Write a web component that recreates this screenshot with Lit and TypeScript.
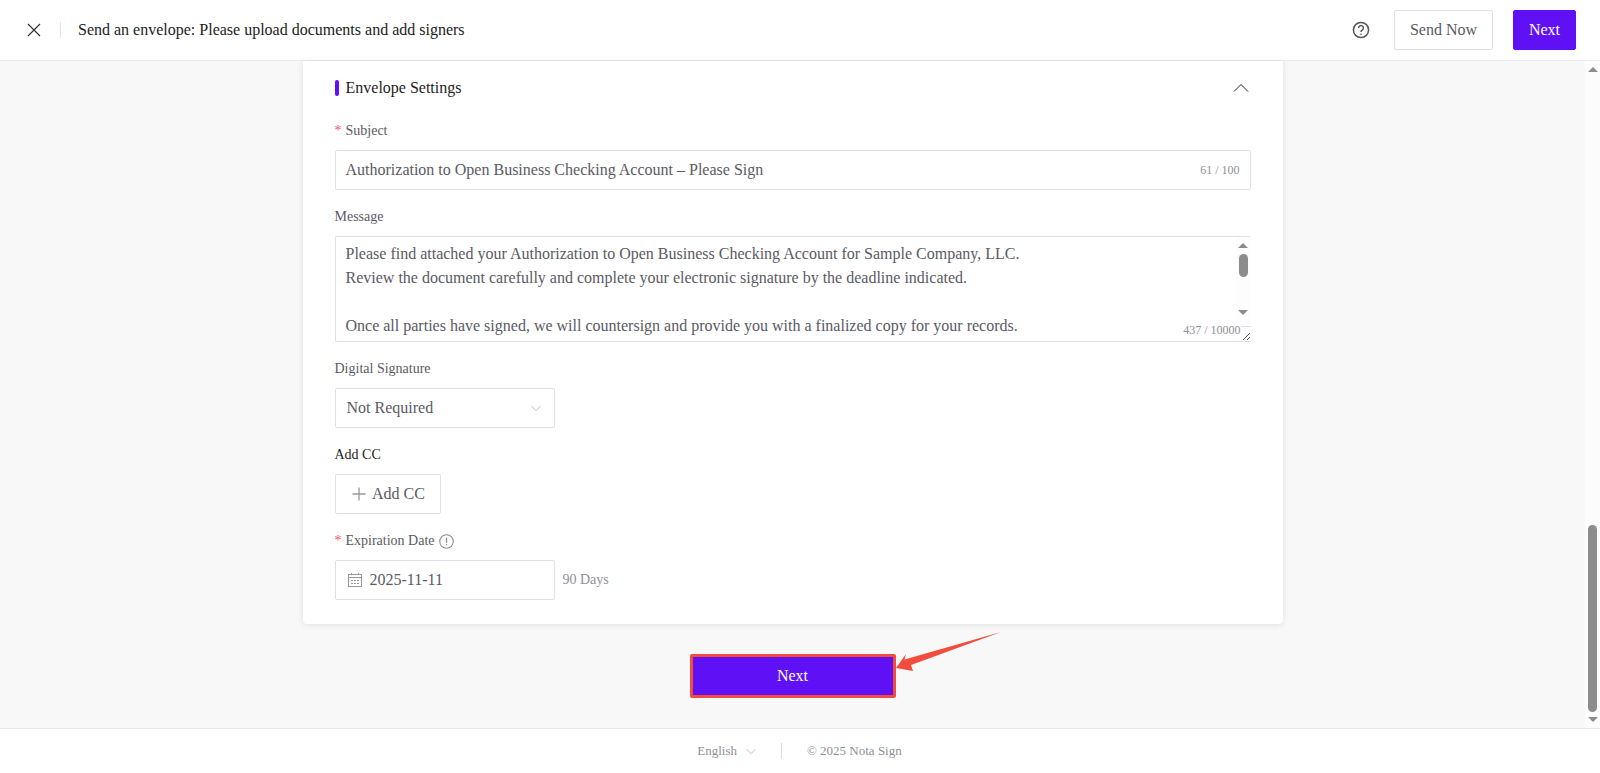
import { LitElement, html, css } from "lit";
import { customElement } from "lit/decorators.js";

const chevron = (size: number, up = false) => html`<svg width=${size} height=${size} viewBox="0 0 16 16" fill="none" stroke="currentColor" stroke-width="1"><path d=${up ? "M1 11.5 L8 4.5 L15 11.5" : "M2 5.5 L8 11.5 L14 5.5"}/></svg>`;

@customElement("app-root")
export class AppRoot extends LitElement {
  static styles = css`
    :host { display: flex; flex-direction: column; height: 773px; overflow: hidden; font-family: "Liberation Serif", serif; color: #5a5a64; background: #fff; }
    button { font: inherit; cursor: pointer; }
    .header { height: 60px; flex: none; display: flex; align-items: center; background: #fff; border-bottom: 1px solid #ebebee; padding: 0 24px 0 26px; }
    .close { width: 16px; height: 16px; color: #333; display: flex; }
    .hsep { width: 1px; height: 16px; background: #e3e3e8; margin: 0 17px 0 18px; }
    .title { font-size: 16px; color: #1c1c22; flex: 1; }
    .help { width: 20px; height: 20px; color: #555; display: flex; margin-right: 23px; }
    .btn { height: 40px; border-radius: 2px; font-size: 16px; border: 1px solid #dfdfe8; background: #fff; color: #5a5a64; padding: 0; display: flex; align-items: center; justify-content: center; }
    .send { width: 99px; margin-right: 20px; }
    .primary { width: 63px; background: #6010f5; border-color: #6010f5; color: #fff; }
    .main { flex: 1; display: flex; min-height: 0; background: #f8f8f8; }
    .content { flex: 1; display: flex; flex-direction: column; align-items: center; min-width: 0; }
    .card { width: 980px; height: 563px; flex: none; box-sizing: border-box; background: #fff; border-radius: 0 0 4px 4px; box-shadow: 0 1px 6px rgba(0,0,0,.1); padding: 0 32px; display: flex; flex-direction: column; }
    .section { height: 49px; flex: none; display: flex; align-items: center; margin-top: 2px; padding-right: 1px; }
    .bar { width: 4px; height: 16px; border-radius: 2px; background: #6010f5; margin-right: 7px; }
    .section-title { font-size: 16px; color: #1c1c22; flex: 1; }
    .collapse { color: #222; width: 16px; height: 16px; display: flex; margin-right: 1px; }
    .label { font-size: 14px; line-height: 18px; height: 18px; color: #5a5a64; display: flex; align-items: center; }
    .label.dark { color: #1c1c22; }
    .req { color: #f5555f; margin-right: 4px; font-size: 14px; }
    .info { width: 15px; height: 15px; margin-left: 4px; color: #8c8c8c; display: flex; }
    .l-subject { margin-top: 10px; }
    .l-message { margin-top: 18px; }
    .l-digital { margin-top: 18px; }
    .l-cc { margin-top: 18px; }
    .l-exp { margin-top: 18px; }
    .field { box-sizing: border-box; height: 40px; border: 1px solid #dfdfe8; border-radius: 2px; background: #fff; display: flex; align-items: center; font-size: 16px; color: #5a5a64; margin-top: 10px; flex: none; }
    .subject { padding: 0 10px; justify-content: space-between; margin-top: 10px; }
    .count { font-size: 12px; color: #8f8f99; }
    .textarea { box-sizing: border-box; position: relative; flex: none; height: 106px; margin-top: 10px; border: 1px solid #dfdfe8; border-right: none; border-radius: 2px; display: flex; font-size: 16px; color: #5a5a64; overflow: hidden; }
    .ta-text { flex: 1; padding: 5px 10px 0; line-height: 24px; min-width: 0; }
    .ta-line { height: 24px; white-space: nowrap; }
    .ta-scroll { width: 15px; flex: none; background: #fdfdfd; display: flex; flex-direction: column; align-items: center; position: relative; }
    .ta-up { margin-top: 6px; }
    .ta-down { margin-top: 33px; }
    .ta-corner { position: absolute; right: 0; bottom: 0; width: 12px; height: 14px; background: #fff; border-top: 1px solid #dfdfe8; display: flex; align-items: flex-end; justify-content: flex-end; }
    .ta-count { position: absolute; right: 10px; bottom: 4px; font-size: 12px; line-height: 14px; color: #8f8f99; background: #fff; }
    .tri-up { width: 0; height: 0; border-left: 5px solid transparent; border-right: 5px solid transparent; border-bottom: 5px solid #8c8c8c; }
    .tri-down { width: 0; height: 0; border-left: 5px solid transparent; border-right: 5px solid transparent; border-top: 5px solid #8c8c8c; }
    .ta-thumb { width: 9px; height: 23px; border-radius: 5px; background: #8c8c8c; margin-top: 6px; }
    .select { width: 220px; padding: 0 11px; justify-content: space-between; }
    .sel-chev { width: 12px; height: 12px; color: #a6a6ad; display: flex; margin-right: 1px; }
    .add { width: 106px; justify-content: center; gap: 6px; padding-left: 2px; }
    .plus { width: 14px; height: 14px; display: flex; color: #999; }
    .date-row { display: flex; align-items: center; margin-top: 10px; }
    .date { width: 220px; padding: 0 11px; gap: 7px; margin-top: 0; }
    .cal { width: 16px; height: 16px; display: flex; color: #999; }
    .days { font-size: 14px; color: #8f8f99; margin-left: 8px; }
    .next-wrap { position: relative; margin-top: 30px; flex: none; width: 206px; height: 44px; }
    .next { box-sizing: border-box; width: 206px; height: 44px; background: #6010f5; border: 3px solid #f24c3d; border-radius: 2px; color: #fff; font-size: 16px; padding: 0; }
    .arrow { position: absolute; left: 206px; top: -23px; width: 106px; height: 70px; pointer-events: none; }
    .scroll { width: 15px; flex: none; background: #fcfcfc; display: flex; flex-direction: column; align-items: center; }
    .scroll .tri-up { margin-top: 6px; }
    .track { flex: 1; display: flex; flex-direction: column; justify-content: flex-end; margin-bottom: 5px; }
    .thumb { width: 9px; height: 187px; border-radius: 5px; background: #8c8c8c; }
    .scroll .tri-down { margin-bottom: 6px; }
    .footer { height: 44px; flex: none; border-top: 1px solid #e6e6e6; background: #fff; display: flex; align-items: center; justify-content: center; font-size: 13px; color: #8f8f99; padding-right: 1px; }
    .lang-chev { width: 12px; height: 12px; margin-left: 8px; display: flex; color: #a6a6ad; }
    .fsep { width: 1px; height: 16px; background: #dcdcdc; margin: 0 25px 0 24px; }
  `;

  render() {
    return html`
      <div class="header">
        <span class="close"><svg width="16" height="16" viewBox="0 0 16 16" fill="none" stroke="currentColor" stroke-width="1.2"><path d="M2 2 L14 14 M14 2 L2 14"/></svg></span>
        <span class="hsep"></span>
        <span class="title">Send an envelope: Please upload documents and add signers</span>
        <span class="help"><svg width="20" height="20" viewBox="0 0 20 20" fill="none" stroke="currentColor" stroke-width="1.5"><circle cx="10" cy="10" r="7.6"/><path d="M7.6 8 a2.4 2.4 0 1 1 3.6 2.1 c-.8.5-1.2 1-1.2 1.8"/><circle cx="10" cy="14.2" r=".5" fill="currentColor" stroke-width=".6"/></svg></span>
        <button class="btn send">Send Now</button>
        <button class="btn primary">Next</button>
      </div>
      <div class="main">
        <div class="content">
          <div class="card">
            <div class="section">
              <span class="bar"></span>
              <span class="section-title">Envelope Settings</span>
              <span class="collapse">${chevron(16, true)}</span>
            </div>
            <div class="label l-subject"><span class="req">*</span>Subject</div>
            <div class="field subject"><span>Authorization to Open Business Checking Account – Please Sign</span><span class="count">61 / 100</span></div>
            <div class="label l-message">Message</div>
            <div class="textarea">
              <div class="ta-text">
                <div class="ta-line">Please find attached your Authorization to Open Business Checking Account for Sample Company, LLC.</div>
                <div class="ta-line">Review the document carefully and complete your electronic signature by the deadline indicated.</div>
                <div class="ta-line"></div>
                <div class="ta-line">Once all parties have signed, we will countersign and provide you with a finalized copy for your records.</div>
              </div>
              <div class="ta-scroll">
                <span class="tri-up ta-up"></span>
                <span class="ta-thumb"></span>
                <span class="tri-down ta-down"></span>
              </div>
              <span class="ta-corner"><svg width="9" height="9" viewBox="0 0 9 9" fill="none" stroke="#555" stroke-width="1"><path d="M1 8 L8 1 M5 8 L8 5"/></svg></span>
              <span class="ta-count">437 / 10000</span>
            </div>
            <div class="label l-digital">Digital Signature</div>
            <div class="field select"><span>Not Required</span><span class="sel-chev">${chevron(12)}</span></div>
            <div class="label dark l-cc">Add CC</div>
            <div class="field add"><span class="plus"><svg width="14" height="14" viewBox="0 0 14 14" stroke="currentColor" stroke-width="1.3"><path d="M7 0.5 V13.5 M0.5 7 H13.5"/></svg></span><span>Add CC</span></div>
            <div class="label l-exp"><span class="req">*</span>Expiration Date<span class="info"><svg width="15" height="15" viewBox="0 0 14 14" fill="none" stroke="currentColor"><circle cx="7" cy="7" r="6.3"/><path d="M7 3.4 V8.2 M7 9.4 V10.6" stroke-width="1.2"/></svg></span></div>
            <div class="date-row">
              <div class="field date"><span class="cal"><svg width="16" height="16" viewBox="0 0 16 16" fill="none" stroke="currentColor"><rect x="1.5" y="2.5" width="13" height="12"/><path d="M1.5 5.5 H14.5 M4.5 1 V3 M11.5 1 V3"/><path d="M4 8.5 H6 M7 8.5 H9 M10 8.5 H12 M4 11.5 H6 M7 11.5 H9 M10 11.5 H12" stroke-width="1"/></svg></span><span>2025-11-11</span></div>
              <span class="days">90 Days</span>
            </div>
          </div>
          <div class="next-wrap">
            <button class="next">Next</button>
            <svg class="arrow" viewBox="0 0 106 70"><path fill="#f24c3d" d="M0 37 L10 23 L8.500 28.500 L105 1 L15 34 L17 40 Z"/></svg>
          </div>
        </div>
        <div class="scroll">
          <span class="tri-up"></span>
          <div class="track"><div class="thumb"></div></div>
          <span class="tri-down"></span>
        </div>
      </div>
      <div class="footer">
        <span>English</span><span class="lang-chev">${chevron(12)}</span>
        <span class="fsep"></span>
        <span>© 2025 Nota Sign</span>
      </div>
    `;
  }
}
